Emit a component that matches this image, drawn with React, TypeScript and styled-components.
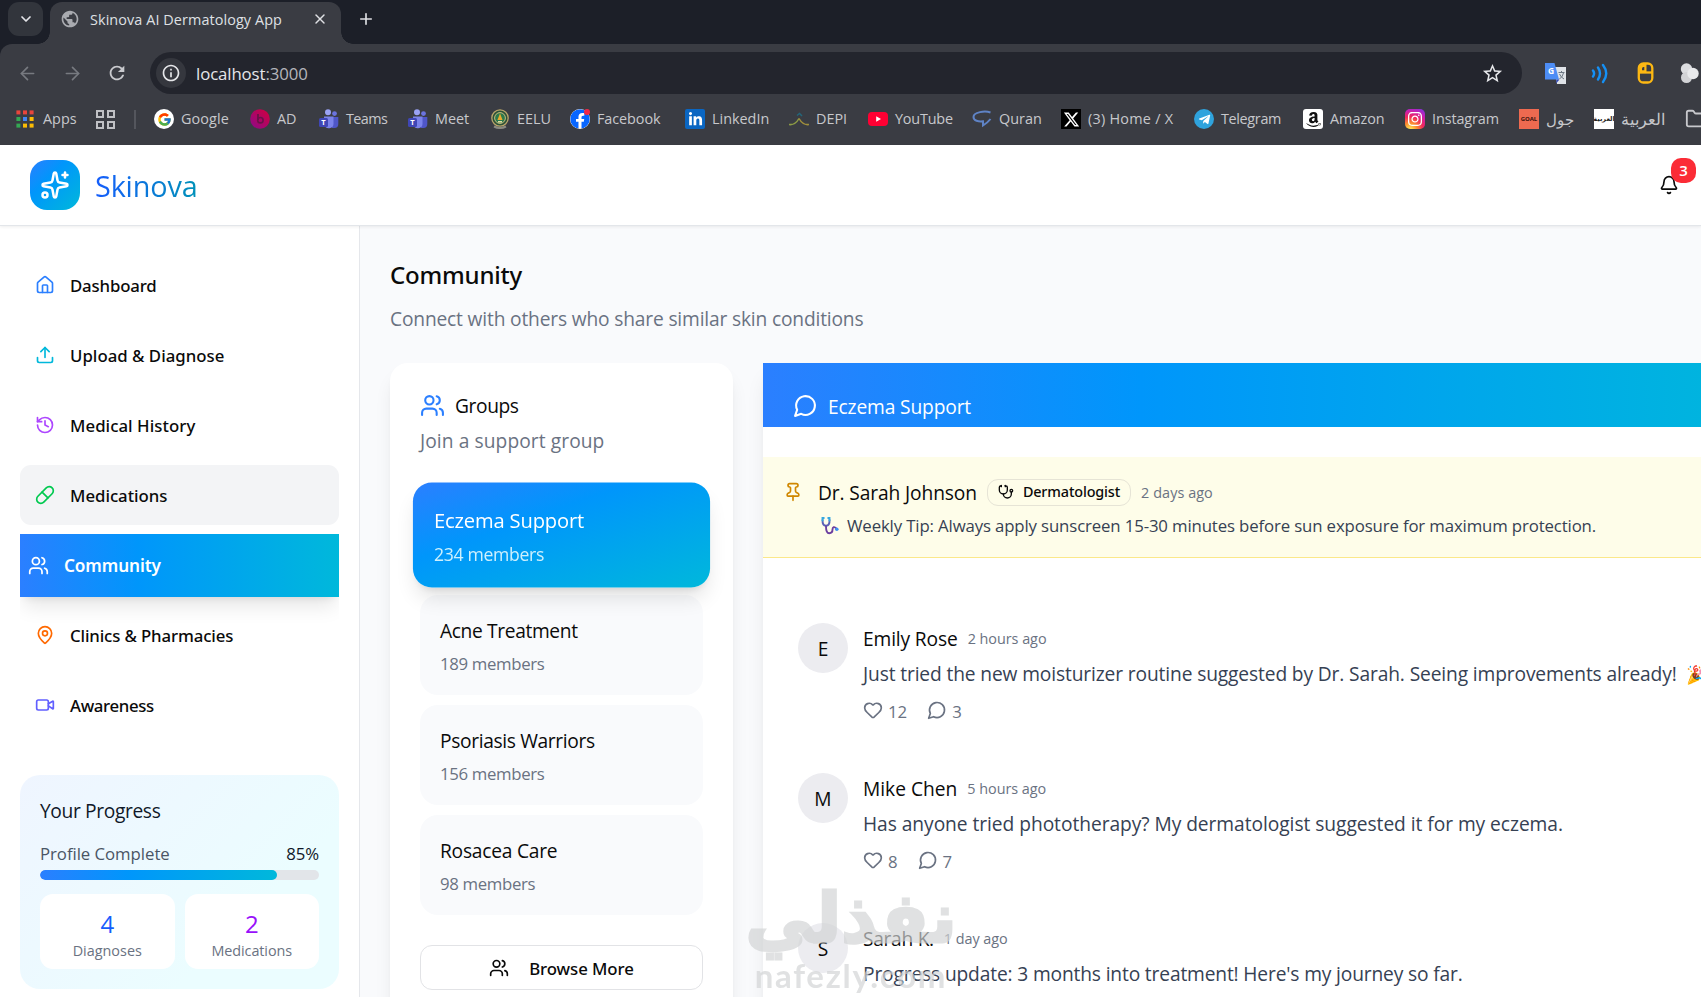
import React from 'react';
import styled, { createGlobalStyle, css } from 'styled-components';
import {
  ArrowLeft, ArrowRight, Bell, ChevronDown, Folder, Heart, History, House, LucideIcon, MapPin,
  Pill, Pin, Plus, Sparkles, Stethoscope, Upload, Users, Video, X,
} from 'lucide-react';
import { MdInfoOutline, MdPublic, MdRefresh, MdStarBorder } from 'react-icons/md';
import { FcGoogle } from 'react-icons/fc';
import { FaAmazon, FaFacebook, FaInstagram, FaLinkedinIn, FaTelegramPlane } from 'react-icons/fa';
import { FaXTwitter } from 'react-icons/fa6';

const Global = createGlobalStyle`
  * { box-sizing: border-box; }
  html, body { margin: 0; height: 100%; overflow: hidden; }
  body { font-family: "Open Sans", "Noto Sans", sans-serif; color: #0a0a0a; }
  svg { display: block; flex: none; }
`;

const medium = css`font-family: "Noto Sans", "Open Sans", sans-serif; font-weight: 500;`;
const brandGradient = ', #2b7fff, #0096fb 37%, #00b8db';

type Spacing = { $ls?: number };

const Text = styled.span<Spacing>`
  letter-spacing: ${p => p.$ls ?? 0}px;
  white-space: nowrap;
`;
const Page = styled.div`
  width: 1701px; height: 997px; overflow: hidden; position: relative;
  display: flex; flex-direction: column; background: #fff;
`;

/* ---------- browser chrome ---------- */
const TabStrip = styled.div`
  height: 44px; flex: none; background: #1c1f28; display: flex; align-items: flex-start; padding: 2px 0 0 8px;
`;
const TabSearch = styled.div`
  width: 35px; height: 34px; border-radius: 11px; background: #32353c; color: #e3e4e8;
  display: flex; align-items: center; justify-content: center;
`;
const Tab = styled.div`
  position: relative; margin-left: 7px; width: 291px; height: 42px; border-radius: 12px 12px 0 0;
  background: #3a3c43; display: flex; align-items: center; padding: 0 13px 8px 10px; color: #dfe0e4;
  font-size: 14.4px;
  &::before, &::after { content: ''; position: absolute; bottom: 0; width: 12px; height: 12px; }
  &::before { left: -12px; background: radial-gradient(circle at 0 0, transparent 11.5px, #3a3c43 12px); }
  &::after { right: -12px; background: radial-gradient(circle at 100% 0, transparent 11.5px, #3a3c43 12px); }
  ${Text} { margin-left: 10px; flex: 1; }
`;
const NewTab = styled.div`color: #dfe0e4; margin: 8px 0 0 16px;`;
const Chrome = styled.div`height: 101px; flex: none; background: #1c1f28;`;
const ChromeBody = styled.div`
  height: 101px; background: #3a3c43; border-top-left-radius: 12px; padding-top: 8px;
`;
const Toolbar = styled.div`display: flex; align-items: center; height: 42px; color: #c9cace;`;
const ToolButton = styled.div<{ $w: number; $dim?: boolean }>`
  width: ${p => p.$w}px; display: flex; justify-content: center; color: ${p => (p.$dim ? '#777a80' : '#c9cace')};
`;
const Address = styled.div`
  margin-left: 6px; width: 1372px; height: 42px; border-radius: 21px; background: #23252d;
  display: flex; align-items: center; padding: 0 18px 0 6px; color: #e6e7ea; font-size: 16.8px;
  ${Text} { margin-left: 10px; flex: 1; }
`;
const InfoDot = styled.div`
  width: 30px; height: 30px; border-radius: 50%; background: #35373e; display: flex; align-items: center; justify-content: center;
`;
const Port = styled.span`color: #b4b6bb;`;
const Extensions = styled.div`display: flex; align-items: center; gap: 24px; margin-left: 23px;`;
const Bookmarks = styled.div`
  display: flex; align-items: center; height: 50px; padding-left: 16px; color: #c7c8cc; font-size: 14.4px; white-space: nowrap;
`;
const Bookmark = styled.div<{ $w: number; $gap?: number }>`
  width: ${p => p.$w}px; flex: none; display: flex; align-items: center; gap: ${p => p.$gap ?? 7}px; line-height: 20px;
`;
const Divider = styled.div`width: 2px; height: 19px; background: #54565d; margin-right: 18px; flex: none;`;
const Fav = styled.span<{ $bg?: string; $fg?: string; $r?: number }>`
  width: 20px; height: 20px; flex: none; display: flex; align-items: center; justify-content: center; overflow: hidden;
  background: ${p => p.$bg ?? 'none'}; color: ${p => p.$fg ?? '#fff'}; border-radius: ${p => p.$r ?? 0}px;
`;
const FavCaption = styled.span<{ $fg: string; $size: number }>`
  font: 700 ${p => p.$size}px/1 "Noto Sans", "DejaVu Sans", sans-serif; color: ${p => p.$fg};
`;
const NewDot = styled.span`
  position: absolute; right: 0; top: 0; width: 6px; height: 6px; border-radius: 50%; background: #f02849;
`;
const FavWrap = styled.span`position: relative; width: 20px; height: 20px; flex: none;`;
const ArabicLabel = styled.span<{ $size: number }>`font-size: ${p => p.$size}px;`;

const AppsGrid = () => (
  <svg width="18" height="18" viewBox="0 0 18 18">
    {['#e8453c', '#e8453c', '#e8453c', '#34a853', '#4285f4', '#fbbc05', '#34a853', '#fbbc05', '#fbbc05'].map((c, i) => (
      <rect key={i} x={(i % 3) * 6.6 + 0.4} y={Math.floor(i / 3) * 6.6 + 0.4} width="4" height="4" fill={c} />
    ))}
  </svg>
);
const FourSquares = () => (
  <svg width="19" height="19" viewBox="0 0 19 19" fill="none" stroke="#c0c1c5" strokeWidth="2">
    <path d="M1 1h6v6H1zM12 1h6v6h-6zM1 12h6v6H1zM12 12h6v6h-6z" />
  </svg>
);
const TeamsLogo = () => (
  <svg width="20" height="20" viewBox="0 0 20 20">
    <circle cx="15.5" cy="4.6" r="2.4" fill="#6b74e0" />
    <circle cx="9" cy="3.2" r="3" fill="#9aa2f5" />
    <path d="M13 8h6.3v7a4 4 0 0 1-4 4H13z" fill="#4f56c8" />
    <path d="M5 7.5h9.5V15a4.6 4.6 0 0 1-9 1z" fill="#7b83eb" />
    <rect y="9" width="9" height="9" rx="1.5" fill="#3f46b5" />
    <text x="4.5" y="16.2" textAnchor="middle" fontFamily="Open Sans" fontWeight="700" fontSize="7.5" fill="#fff">T</text>
  </svg>
);
const BeatsLogo = () => (
  <svg width="20" height="20" viewBox="0 0 20 20">
    <defs><linearGradient id="beats" x1="1" y1="0" x2="0" y2="1"><stop stopColor="#d4003c" /><stop offset="1" stopColor="#8a0a8a" /></linearGradient></defs>
    <circle cx="10" cy="10" r="9.8" fill="url(#beats)" />
    <path d="M8 5v6" stroke="#6a1248" strokeWidth="1.8" />
    <circle cx="10.4" cy="11.2" r="2.7" fill="none" stroke="#6a1248" strokeWidth="1.6" />
  </svg>
);
const Emblem = () => (
  <svg width="20" height="20" viewBox="0 0 20 20">
    <circle cx="10" cy="9" r="8.2" fill="#2d5238" stroke="#b9a56a" strokeWidth="1.3" />
    <circle cx="10" cy="9" r="5.4" fill="#2c7a4b" stroke="#c9bd7c" strokeWidth="1" />
    <path d="M10 4.5 12.6 11H7.4z" fill="#e9a92c" /><path d="M8 12h4v1.5H8z" fill="#e7dca0" />
    <path d="M4 17.5q6 3 12 0" stroke="#8a8a80" strokeWidth="2" fill="none" />
  </svg>
);
const DepiLogo = () => (
  <svg width="20" height="20" viewBox="0 0 20 20" fill="none" strokeWidth="1.5">
    <path d="M0 15.5q6 1 10-6" stroke="#8d9b45" /><path d="M10 9.5q4 7 10 6" stroke="#a08f3c" />
    <path d="M8 6.5 10.5 4.5 13 7" stroke="#23667a" />
  </svg>
);
const YouTubeLogo = () => (
  <svg width="20" height="20" viewBox="0 0 20 20"><rect y="3" width="20" height="14" rx="4" fill="#ff0033" /><path d="m8.2 7.3 4.8 2.7-4.8 2.7z" fill="#fff" /></svg>
);
const QuranLogo = () => (
  <svg width="20" height="20" viewBox="0 0 20 20" fill="none" stroke="#5f83c6" strokeWidth="2">
    <path d="M18.500 3.500C13 1.500 1.500 3 1.500 8c0 3.800 5 4.800 9.500 4.300v4.200c2.500-1.500 5.500-4 7.500-6.500" />
  </svg>
);
const InstagramLogo = () => (
  <Fav $r={5} $bg="radial-gradient(circle at 25% 105%, #ffd94e 8%, #fb8b2f 28%, #f0265f 52%, #c81fb4 75%, #6b3be8 100%)"><FaInstagram size={16} /></Fav>
);
const TranslateLogo = () => (
  <svg width="21" height="21" viewBox="0 0 21 21">
    <path d="M9 4h12v17h-9z" fill="#dfe3e8" /><path d="M0 0h9.5l4.5 16.5H0z" fill="#4d8df5" />
    <path d="m11.500 16.500 3 0-3.500 4z" fill="#3047b5" />
    <text x="6" y="11" textAnchor="middle" fontFamily="Open Sans" fontWeight="700" fontSize="8.5" fill="#fff">G</text>
    <path d="M13.500 9.500h6M16.500 8v1.500M18.500 10q-1 4-4 6M14.500 11q1.500 3.500 4.500 5" stroke="#6d7884" strokeWidth="1" fill="none" />
  </svg>
);
const WavesLogo = () => (
  <svg width="21" height="21" viewBox="0 0 21 21" fill="none" stroke="#1590f5" strokeWidth="2.4" strokeLinecap="round">
    <path d="M3 7.500q2.200 3 0 6M8 4.500q4 6 0 12M13 2q6.500 8.500 0 17" />
  </svg>
);
const MouseLogo = () => (
  <svg width="21" height="22" viewBox="0 0 21 22" fill="none" stroke="#fdb813" strokeWidth="2.3">
    <rect x="3.8" y="1.5" width="13.5" height="19" rx="4.5" /><path d="M4 10.500h13.200" />
    <path d="M4.500 6a3.500 3.500 0 0 1 3.500-4h3.500v8.500h-7z" fill="#fdb813" stroke="none" />
    <path d="M7 8.300V6.500q0-1.500 1.500-1.500h.800v3.300z" fill="#3a3c43" stroke="none" />
  </svg>
);
const BubblesLogo = () => (
  <svg width="20" height="21" viewBox="0 0 20 21"><circle cx="6.5" cy="6" r="5.7" fill="#dcdde0" /><circle cx="6.5" cy="14.5" r="5.5" fill="#d2d3d6" /><circle cx="13" cy="10.5" r="5.7" fill="#e9eaec" /></svg>
);

/* Speech bubble with a pointed tail at its lower left. */
const Bubble = ({ size }: { size: number }) => (
  <svg width={size} height={size} viewBox="0 0 24 24" fill="none" stroke="currentColor" strokeWidth="2" strokeLinecap="round" strokeLinejoin="round">
    <path d="M7.900 20A9 9 0 1 0 4 16.100L2 22Z" />
  </svg>
);

type Mark = { label: React.ReactNode; w: number; ls?: number; icon: React.ReactNode };
const marks: Mark[] = [
  { label: 'Google', w: 96, ls: 0.1, icon: <Fav $bg="#fff" $r={10}><FcGoogle size={15} /></Fav> },
  { label: 'AD', w: 69, icon: <BeatsLogo /> },
  { label: 'Teams', w: 89, ls: -0.6, icon: <TeamsLogo /> },
  { label: 'Meet', w: 82, icon: <TeamsLogo /> },
  { label: 'EELU', w: 80, icon: <Emblem /> },
  { label: 'Facebook', w: 115, ls: -0.07, icon: <FavWrap><Fav $bg="#fff" $fg="#0866ff" $r={10}><FaFacebook size={20} /></Fav><NewDot /></FavWrap> },
  { label: 'LinkedIn', w: 104, icon: <Fav $bg="#0a66c2" $r={2}><FaLinkedinIn size={15} /></Fav> },
  { label: 'DEPI', w: 79, icon: <DepiLogo /> },
  { label: 'YouTube', w: 104, ls: -0.2, icon: <YouTubeLogo /> },
  { label: 'Quran', w: 89, icon: <QuranLogo /> },
  { label: '(3) Home / X', w: 133, ls: 0.26, icon: <Fav $bg="#000"><FaXTwitter size={17} /></Fav> },
  { label: 'Telegram', w: 109, ls: -0.34, icon: <Fav $bg="#2fa3dd" $r={10}><FaTelegramPlane size={13} /></Fav> },
  { label: 'Amazon', w: 102, icon: <Fav $bg="#fff" $fg="#111" $r={3}><FaAmazon size={17} /></Fav> },
  { label: 'Instagram', w: 114, ls: -0.1, icon: <InstagramLogo /> },
  { label: <ArabicLabel $size={15}>جول</ArabicLabel>, w: 75, icon: <Fav $bg="#ee6a50"><FavCaption $fg="#40150f" $size={6}>GOAL</FavCaption></Fav> },
  { label: <ArabicLabel $size={15.6}>العربية</ArabicLabel>, w: 91, icon: <Fav $bg="#fff"><FavCaption $fg="#222" $size={6.5}>العربية</FavCaption></Fav> },
];

/* ---------- application header ---------- */
const AppHeader = styled.header`
  height: 81px; flex: none; background: #fff; border-bottom: 1px solid #e3e6ea; display: flex; align-items: center;
  padding: 0 32px 1px 30px; position: relative; z-index: 1; box-shadow: 0 1px 3px rgba(0, 0, 0, .07);
`;
const Logo = styled.div`
  width: 50px; height: 50px; border-radius: 17px; color: #fff; display: flex; align-items: center; justify-content: center;
  background: linear-gradient(to bottom right ${brandGradient});
`;
const Brand = styled.h1<Spacing>`
  margin: 0 auto 0 15px; font-size: 28.8px; line-height: 44px; font-weight: 400; letter-spacing: ${p => p.$ls ?? 0}px;
  background: linear-gradient(to right, #155dfc, #0092b8); background-clip: text; color: transparent; padding-top: 3px;
`;
const BellButton = styled.div`position: relative; margin-right: -10px;`;
const Count = styled.span`
  position: absolute; left: 12px; top: -17px; width: 25px; height: 25px; border-radius: 10px; background: #fb2c36;
  color: #fff; font: 600 15px/25px "Open Sans", sans-serif; text-align: center;
`;

/* ---------- sidebar ---------- */
const Body = styled.div`flex: 1; min-height: 0; display: flex; background: #f9fafc;`;
const Sidebar = styled.aside`
  width: 360px; flex: none; background: #fff; border-right: 1px solid #e5e7eb; padding: 29px 20px 0;
`;
const Nav = styled.nav`display: flex; flex-direction: column; gap: 10px; overflow: hidden; padding-bottom: 40px;`;
const NavItem = styled.a<Spacing & { $state?: 'hover' | 'active'; $color: string }>`
  height: 60px; display: flex; align-items: center; gap: 15px; padding: 0 15px; border-radius: 11px;
  font-size: 16.8px; ${medium} letter-spacing: ${p => p.$ls ?? 0}px; line-height: 25px; white-space: nowrap;
  svg { color: ${p => p.$color}; }
  ${Text} { padding-top: 1px; letter-spacing: inherit; }
  ${p => p.$state === 'hover' && 'background: #f3f4f6;'}
  ${p => p.$state === 'active' && `
    height: 63px; margin: -1.5px 0; padding: 0 0 0 8px; border-radius: 0; color: #fff; font-weight: 600; font-size: 17.2px;
    background: linear-gradient(to right ${brandGradient});
    box-shadow: 0 13px 20px -4px rgba(0, 0, 0, .1), 0 5px 8px -5px rgba(0, 0, 0, .1);
  `}
`;
const navItems: { icon: LucideIcon; label: string; color: string; ls: number; state?: 'hover' | 'active' }[] = [
  { icon: House, label: 'Dashboard', color: '#2b7fff', ls: -0.16 },
  { icon: Upload, label: 'Upload & Diagnose', color: '#00b8db', ls: 0.02 },
  { icon: History, label: 'Medical History', color: '#ad46ff', ls: 0.05 },
  { icon: Pill, label: 'Medications', color: '#00c950', ls: -0.02, state: 'hover' },
  { icon: Users, label: 'Community', color: '#fff', ls: -0.1, state: 'active' },
  { icon: MapPin, label: 'Clinics & Pharmacies', color: '#ff6900', ls: -0.13 },
  { icon: Video, label: 'Awareness', color: '#615fff', ls: -0.35 },
];
const Progress = styled.section`
  height: 214px; border-radius: 20px; padding: 20px; background: linear-gradient(135deg, #eff5ff, #ebfdff 70%);
`;
const ProgressTitle = styled.h3<Spacing>`
  margin: 0; font-size: 19.2px; line-height: 30px; font-weight: 400; letter-spacing: ${p => p.$ls}px; padding-top: 1px; color: #101828;
`;
const ProgressRow = styled.div`
  display: flex; justify-content: space-between; font-size: 16.8px; line-height: 25px; margin-top: 15px;
  color: #101828; ${Text}:first-child { color: #4a5565; }
`;
const Track = styled.div`height: 10px; border-radius: 5px; background: #e2e5e9; margin-top: 4px; overflow: hidden;`;
const Fill = styled.div`width: 85%; height: 100%; border-radius: 5px; background: linear-gradient(to right ${brandGradient});`;
const Stats = styled.div`display: grid; grid-template-columns: 1fr 1fr; gap: 10px; margin-top: 14px;`;
const Stat = styled.div`
  height: 75px; background: #fff; border-radius: 13px; text-align: center; font-size: 14.4px; color: #6a7282; padding-top: 12px; line-height: 20px;
`;
const StatValue = styled.div<{ $color: string }>`font-size: 24px; line-height: 35px; color: ${p => p.$color};`;

/* ---------- main ---------- */
const Main = styled.main`flex: 1; min-width: 0; padding: 29px 0 0 30px; overflow: hidden;`;
const Title = styled.h2<Spacing>`
  margin: 0; font-size: 24px; ${medium} line-height: 38px; letter-spacing: ${p => p.$ls}px; padding-top: 1px;
`;
const Subtitle = styled.p<Spacing>`
  margin: 10px 0 30px; font-size: 19.2px; line-height: 29px; letter-spacing: ${p => p.$ls}px; color: #6a7282;
`;
const Columns = styled.div`display: grid; grid-template-columns: 343px 1020px; gap: 30px; align-items: start;`;
const Card = styled.section<{ $square?: boolean }>`
  background: #fff; border-radius: ${p => (p.$square ? 0 : 18)}px; height: 720px;
  box-shadow: 0 13px 20px -4px rgba(0, 0, 0, .09), 0 5px 8px -5px rgba(0, 0, 0, .09);
`;
const GroupsCard = styled(Card)`padding: 30px 30px 0;`;
const GroupsHead = styled.div`
  display: flex; align-items: center; gap: 10px; height: 25px; font-size: 19.2px; svg { color: #2b7fff; }
`;
const GroupsNote = styled.div<Spacing>`
  font-size: 19.2px; line-height: 30px; margin: 8px 0 29px; color: #6a7282; letter-spacing: ${p => p.$ls}px;
`;
const GroupList = styled.div`display: flex; flex-direction: column; gap: 10px;`;
const GroupItem = styled.div<{ $active?: boolean }>`
  height: 100px; border-radius: 18px; padding: 21px 20px 0; background: #f9fafc; white-space: nowrap;
  ${p => p.$active && `
    position: relative; color: #fff; transform: scale(1.05);
    background: linear-gradient(to bottom right ${brandGradient});
    box-shadow: 0 13px 20px -4px rgba(0, 0, 0, .12), 0 5px 8px -5px rgba(0, 0, 0, .12);
  `}
`;
const GroupName = styled.div<Spacing>`font-size: 19.2px; line-height: 30px; letter-spacing: ${p => p.$ls}px;`;
const Members = styled.div<{ $active?: boolean }>`
  font-size: 16.8px; line-height: 25px; margin-top: 5px; letter-spacing: ${p => (p.$active ? -0.3 : -0.34)}px;
  color: ${p => (p.$active ? '#cdf0fd' : '#6a7282')};
`;
const Browse = styled.button<Spacing>`
  margin-top: 30px; width: 100%; height: 45px; border: 1px solid #e2e3e6; border-radius: 12px; background: #fff; color: #0a0a0a;
  display: flex; align-items: center; justify-content: center; gap: 20px; padding: 0; font-size: 16.8px; ${medium}
  ${Text} { padding-top: 1px; }
`;
const ChatHead = styled.div`
  height: 64px; background: linear-gradient(to right ${brandGradient}); color: #fff; display: flex; align-items: center; gap: 10px;
  padding: 22px 30px 0; font-size: 19.2px; line-height: 30px;
  svg { margin-top: -2px; }
  ${Text} { padding-top: 2px; }
`;
const Pinned = styled.div`
  margin-top: 30px; height: 101px; background: #fefde9; border-bottom: 1.5px solid #fbe88a; display: flex; gap: 15px; padding: 21px 20px 0;
  > svg { color: #d08700; margin-top: 4px; }
`;
const Line = styled.div`display: flex; align-items: center; gap: 10px; height: 30px; white-space: nowrap;`;
const Name = styled(Text)`font-size: 19.2px; line-height: 30px;`;
const Time = styled(Text)`font-size: 14.4px; line-height: 20px; color: #6a7282;`;
const RoleBadge = styled.span`
  display: flex; align-items: center; gap: 9px; height: 27px; padding: 0 10px; border: 1px solid #e6e4d6; border-radius: 11px;
  font-size: 14.4px; ${medium} line-height: 20px; position: relative; top: -1px;
`;
const Tip = styled.div`
  display: flex; align-items: center; gap: 8px; height: 25px; margin: 5px 0 0 3px; font-size: 16.8px; color: #364153;
`;
const Feed = styled.div`display: flex; flex-direction: column; gap: 20px; padding: 50px 20px 0;`;
const Post = styled.article`display: flex; gap: 15px; padding: 15px; height: 130px;`;
const PostBody = styled.div`padding-top: 1px;`;
const Avatar = styled.div`
  width: 50px; height: 50px; flex: none; border-radius: 50%; background: #ececf0; font-size: 19.2px; line-height: 52px; text-align: center;
`;
const PostText = styled.p<Spacing>`
  margin: 5px 0 0; font-size: 19.2px; line-height: 30px; letter-spacing: ${p => p.$ls}px; color: #364153; white-space: nowrap;
`;
const Emoji = styled.span`font-size: 18px; margin-left: 4px; line-height: 1;`;
const Actions = styled.div`display: flex; gap: 20px; margin-top: 9px; color: #6a7282; font-size: 16.8px; line-height: 25px;`;
const Action = styled.span`display: flex; align-items: center; gap: 5px; svg { margin-top: -3px; } ${Text} { padding-top: 1px; }`;

const TipStethoscope = () => (
  <svg width="18" height="18" viewBox="0 0 18 18" fill="none" strokeWidth="1.9" strokeLinecap="round">
    <path d="M1.600 3Q1.200 8.500 5 8.800 8.900 8.500 8.500 3" stroke="#5b5fb5" />
    <path d="M2.800 1H1.500v2.500M7.200 1h1.300v2.500" stroke="#35a8e0" />
    <path d="M5 9.500c0 4 .400 6.700 3.200 6.700s3.300-2 3.300-3.700c0-2.400 1.800-3.300 3.700-1.200" stroke="#6b3fa0" />
    <circle cx="15.8" cy="12.3" r="1.8" fill="#3f8ff0" stroke="none" />
  </svg>
);

/* ---------- watermark ---------- */
const Watermark = styled.div`
  position: absolute; left: 746px; top: 880px; width: 210px; z-index: 5; color: #d2d4d5; opacity: .68; text-align: center; pointer-events: none;
`;
const WatermarkArabic = styled.div`
  font: 700 69px/76px "DejaVu Sans", sans-serif; white-space: nowrap; display: flex; justify-content: center; -webkit-text-stroke: 3px #d2d4d5;
`;
const WatermarkLatin = styled.div`font: 700 33px/38px "Lato", "Open Sans", sans-serif; letter-spacing: 1.7px;`;

const groups = [
  { name: 'Eczema Support', members: 234, ls: -0.14, active: true },
  { name: 'Acne Treatment', members: 189, ls: -0.36 },
  { name: 'Psoriasis Warriors', members: 156, ls: -0.35 },
  { name: 'Rosacea Care', members: 98, ls: -0.24 },
];
const posts = [
  { name: 'Emily Rose', nls: -0.14, time: '2 hours ago', text: 'Just tried the new moisturizer routine suggested by Dr. Sarah. Seeing improvements already! ', emoji: '🎉', ls: -0.13, likes: 12, replies: 3 },
  { name: 'Mike Chen', nls: 0, time: '5 hours ago', text: 'Has anyone tried phototherapy? My dermatologist suggested it for my eczema.', ls: -0.05, likes: 8, replies: 7 },
  { name: 'Sarah K.', nls: -0.3, time: '1 day ago', text: "Progress update: 3 months into treatment! Here's my journey so far.", ls: -0.15, likes: 24, replies: 9 },
];

export default function App() {
  return (
    <Page>
      <Global />
      <TabStrip>
        <TabSearch><ChevronDown size={16} strokeWidth={2.6} /></TabSearch>
        <Tab>
          <MdPublic size={20} color="#a9abb0" />
          <Text $ls={0.09}>Skinova AI Dermatology App</Text>
          <X size={16} strokeWidth={2.2} />
        </Tab>
        <NewTab><Plus size={18} strokeWidth={2.2} /></NewTab>
      </TabStrip>
      <Chrome>
        <ChromeBody>
          <Toolbar>
            <ToolButton $w={55} $dim><ArrowLeft size={21} strokeWidth={1.9} /></ToolButton>
            <ToolButton $w={35} $dim><ArrowRight size={21} strokeWidth={1.9} /></ToolButton>
            <ToolButton $w={54}><MdRefresh size={22} /></ToolButton>
            <Address>
              <InfoDot><MdInfoOutline size={20} /></InfoDot>
              <Text $ls={-0.1}>localhost<Port>:3000</Port></Text>
              <MdStarBorder size={23} />
            </Address>
            <Extensions><TranslateLogo /><WavesLogo /><MouseLogo /><BubblesLogo /></Extensions>
          </Toolbar>
          <Bookmarks>
            <Bookmark $w={80} $gap={9}><AppsGrid /><Text>Apps</Text></Bookmark>
            <Bookmark $w={38}><FourSquares /></Bookmark>
            <Divider />
            {marks.map((m, i) => <Bookmark key={i} $w={m.w}>{m.icon}<Text $ls={m.ls}>{m.label}</Text></Bookmark>)}
            <Folder size={22} strokeWidth={2} />
          </Bookmarks>
        </ChromeBody>
      </Chrome>

      <AppHeader>
        <Logo><Sparkles size={30} /></Logo>
        <Brand $ls={-0.15}>Skinova</Brand>
        <BellButton><Bell size={20} /><Count>3</Count></BellButton>
      </AppHeader>

      <Body>
        <Sidebar>
          <Nav>
            {navItems.map(({ icon: Icon, ...n }) => (
              <NavItem key={n.label} $state={n.state} $color={n.color} $ls={n.ls}>
                <Icon size={n.state === 'active' ? 21 : 20} /><Text>{n.label}</Text>
              </NavItem>
            ))}
          </Nav>
          <Progress>
            <ProgressTitle $ls={-0.36}>Your Progress</ProgressTitle>
            <ProgressRow><Text $ls={-0.05}>Profile Complete</Text><Text $ls={-0.1}>85%</Text></ProgressRow>
            <Track><Fill /></Track>
            <Stats>
              <Stat><StatValue $color="#155dfc">4</StatValue>Diagnoses</Stat>
              <Stat><StatValue $color="#9810fa">2</StatValue><Text $ls={-0.09}>Medications</Text></Stat>
            </Stats>
          </Progress>
        </Sidebar>

        <Main>
          <Title $ls={-0.2}>Community</Title>
          <Subtitle $ls={-0.17}>Connect with others who share similar skin conditions</Subtitle>
          <Columns>
            <GroupsCard>
              <GroupsHead><Users size={25} /><Text $ls={-0.4}>Groups</Text></GroupsHead>
              <GroupsNote $ls={0.08}>Join a support group</GroupsNote>
              <GroupList>
                {groups.map(g => (
                  <GroupItem key={g.name} $active={g.active}>
                    <GroupName $ls={g.ls}>{g.name}</GroupName>
                    <Members $active={g.active}>{g.members} members</Members>
                  </GroupItem>
                ))}
              </GroupList>
              <Browse><Users size={20} /><Text $ls={-0.07}>Browse More</Text></Browse>
            </GroupsCard>

            <Card $square>
              <ChatHead><Bubble size={25} /><Text $ls={-0.14}>Eczema Support</Text></ChatHead>
              <Pinned>
                <Pin size={20} />
                <div>
                  <Line>
                    <Name $ls={-0.12}>Dr. Sarah Johnson</Name>
                    <RoleBadge><Stethoscope size={16} /><Text $ls={-0.14}>Dermatologist</Text></RoleBadge>
                    <Time $ls={0.07}>2 days ago</Time>
                  </Line>
                  <Tip>
                    <TipStethoscope />
                    <Text $ls={-0.135}>Weekly Tip: Always apply sunscreen 15-30 minutes before sun exposure for maximum protection.</Text>
                  </Tip>
                </div>
              </Pinned>
              <Feed>
                {posts.map(p => (
                  <Post key={p.name}>
                    <Avatar>{p.name[0]}</Avatar>
                    <PostBody>
                      <Line><Name $ls={p.nls}>{p.name}</Name><Time $ls={-0.03}>{p.time}</Time></Line>
                      <PostText $ls={p.ls}>{p.text}{p.emoji && <Emoji>{p.emoji}</Emoji>}</PostText>
                      <Actions>
                        <Action><Heart size={20} /><Text>{p.likes}</Text></Action>
                        <Action><Bubble size={20} /><Text>{p.replies}</Text></Action>
                      </Actions>
                    </PostBody>
                  </Post>
                ))}
              </Feed>
            </Card>
          </Columns>
        </Main>
      </Body>

      <Watermark>
        <WatermarkArabic>نفذلي</WatermarkArabic>
        <WatermarkLatin>nafezly.com</WatermarkLatin>
      </Watermark>
    </Page>
  );
}
